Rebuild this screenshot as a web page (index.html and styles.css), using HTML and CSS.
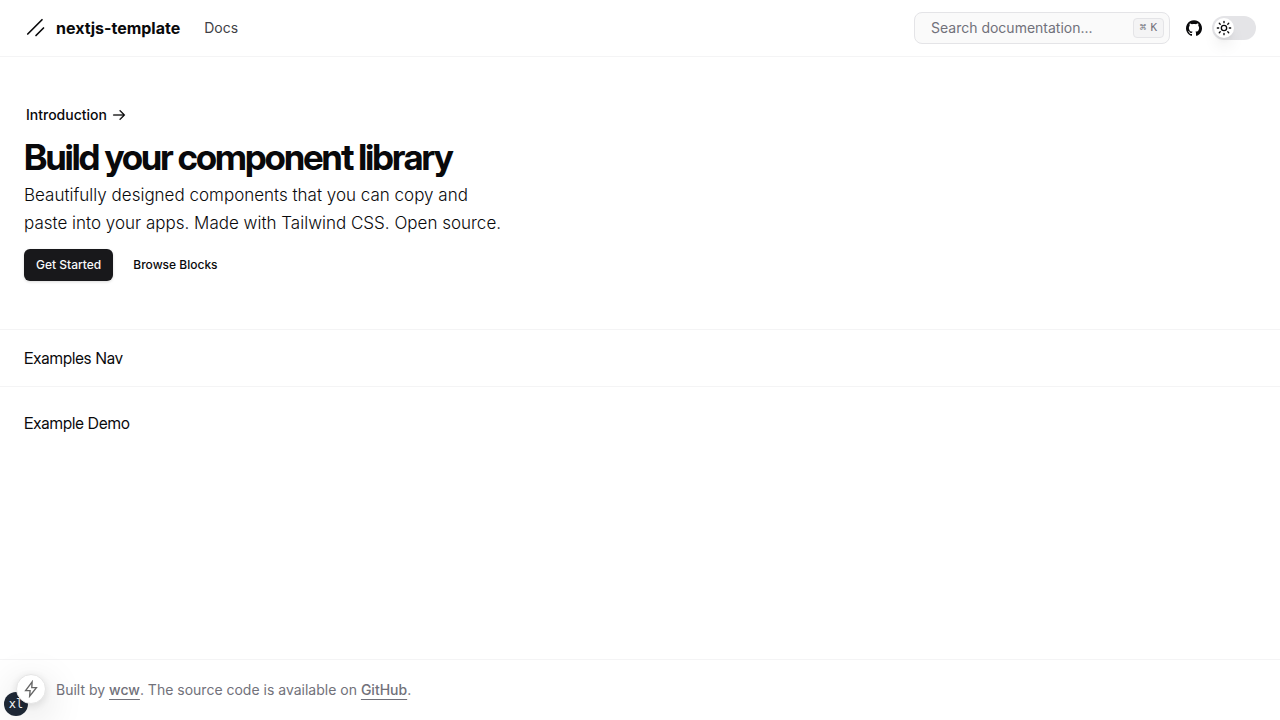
FILE: index.html
```html
<!DOCTYPE html>
<html lang="en">
<head>
<meta charset="utf-8">
<meta name="viewport" content="width=device-width, initial-scale=1">
<title>nextjs-template</title>
<link rel="stylesheet" href="styles.css">
</head>
<body>
<header class="site-header">
  <a class="brand" href="#">
    <svg class="brand-logo" viewBox="0 0 256 256" fill="none" stroke="currentColor" stroke-width="18" stroke-linecap="round" aria-hidden="true"><path d="M208 128L128 208M192 40L40 192"/></svg>
    <span>nextjs-template</span>
  </a>
  <nav class="main-nav"><a href="#">Docs</a></nav>
  <div class="header-tools">
    <button class="search" type="button"><span>Search documentation...</span><kbd><span class="cmd">⌘</span>K</kbd></button>
    <a class="icon-link" href="#" aria-label="GitHub">
      <svg viewBox="0 0 438.549 438.549" fill="currentColor" aria-hidden="true"><path d="M409.132 114.573c-19.608-33.596-46.205-60.194-79.798-79.8-33.598-19.607-70.277-29.408-110.063-29.408-39.781 0-76.472 9.804-110.063 29.408-33.596 19.605-60.192 46.204-79.8 79.8C9.803 148.168 0 184.854 0 224.63c0 47.78 13.94 90.745 41.827 128.906 27.884 38.164 63.906 64.572 108.063 79.227 5.14.954 8.945.283 11.419-1.996 2.475-2.282 3.711-5.14 3.711-8.562 0-.571-.049-5.708-.144-15.417a2549.81 2549.81 0 01-.144-25.406l-6.567 1.136c-4.187.767-9.469 1.092-15.846 1-6.374-.089-12.991-.757-19.842-1.999-6.854-1.231-13.229-4.086-19.13-8.559-5.898-4.473-10.085-10.328-12.56-17.556l-2.855-6.57c-1.903-4.374-4.899-9.233-8.992-14.559-4.093-5.331-8.232-8.945-12.419-10.848l-1.999-1.431c-1.332-.951-2.568-2.098-3.711-3.429-1.142-1.331-1.997-2.663-2.568-3.997-.572-1.335-.098-2.43 1.427-3.289 1.525-.859 4.281-1.276 8.28-1.276l5.708.853c3.807.763 8.516 3.042 14.133 6.851 5.614 3.806 10.229 8.754 13.846 14.842 4.38 7.806 9.657 13.754 15.846 17.847 6.184 4.093 12.419 6.136 18.699 6.136 6.28 0 11.704-.476 16.274-1.423 4.565-.952 8.848-2.383 12.847-4.285 1.713-12.758 6.377-22.559 13.988-29.41-10.848-1.14-20.601-2.857-29.264-5.14-8.658-2.286-17.605-5.996-26.835-11.14-9.235-5.137-16.896-11.516-22.985-19.126-6.09-7.614-11.088-17.61-14.987-29.979-3.901-12.374-5.852-26.648-5.852-42.826 0-23.035 7.52-42.637 22.557-58.817-7.044-17.318-6.379-36.732 1.997-58.24 5.52-1.715 13.706-.428 24.554 3.853 10.85 4.283 18.794 7.952 23.84 10.994 5.046 3.041 9.089 5.618 12.135 7.708 17.705-4.947 35.976-7.421 54.818-7.421s37.117 2.474 54.823 7.421l10.849-6.849c7.419-4.57 16.18-8.758 26.262-12.565 10.088-3.805 17.802-4.853 23.134-3.138 8.562 21.509 9.325 40.922 2.279 58.24 15.036 16.18 22.559 35.787 22.559 58.817 0 16.178-1.958 30.497-5.853 42.966-3.9 12.471-8.941 22.457-15.125 29.979-6.191 7.521-13.901 13.85-23.131 18.986-9.232 5.14-18.182 8.85-26.84 11.136-8.662 2.286-18.415 4.004-29.263 5.146 9.894 8.562 14.842 22.077 14.842 40.539v60.237c0 3.422 1.19 6.279 3.572 8.562 2.379 2.279 6.136 2.95 11.276 1.995 44.163-14.653 80.185-41.062 108.068-79.226 27.88-38.161 41.825-81.126 41.825-128.906-.01-39.771-9.818-76.454-29.414-110.049z"/></svg>
    </a>
    <label class="theme-switch">
      <input type="checkbox" role="switch" aria-label="Dark mode">
      <span class="thumb"><svg viewBox="0 0 24 24" fill="none" stroke="currentColor" stroke-width="2" stroke-linecap="round" stroke-linejoin="round" aria-hidden="true"><circle cx="12" cy="12" r="4"/><path d="M12 2v2M12 20v2M4.93 4.93l1.41 1.41M17.66 17.66l1.41 1.41M2 12h2M20 12h2M6.34 17.66l-1.41 1.41M19.07 4.93l-1.41 1.41"/></svg></span>
    </label>
  </div>
</header>
<main>
  <section class="hero">
    <a class="announcement" href="#">Introduction
      <svg viewBox="0 0 15 15" fill="currentColor" stroke="currentColor" stroke-width=".3" aria-hidden="true"><path fill-rule="evenodd" clip-rule="evenodd" d="M8.146 3.146a.5.5 0 0 1 .708 0l4 4a.5.5 0 0 1 0 .708l-4 4a.5.5 0 0 1-.708-.708L11.293 8H2.5a.5.5 0 0 1 0-1h8.793L8.146 3.854a.5.5 0 0 1 0-.708Z"/></svg>
    </a>
    <h1>Build your component library</h1>
    <p>Beautifully designed components that you can copy and paste into your apps. Made with Tailwind CSS. Open source.</p>
    <div class="actions">
      <a class="btn btn-primary" href="#">Get Started</a>
      <a class="btn" href="#">Browse Blocks</a>
    </div>
  </section>
  <nav class="examples-nav">Examples Nav</nav>
  <section class="example-demo">Example Demo</section>
</main>
<footer class="site-footer">
  <p>Built by <a href="#">wcw</a>. The source code is available on <a href="#">GitHub</a>.</p>
</footer>
<div class="breakpoint">xl</div>
<button class="dev-indicator" type="button" aria-label="Static route">
  <svg viewBox="0 0 16 16" fill="none" stroke="currentColor" stroke-width="1.2" stroke-linejoin="miter" aria-hidden="true"><path d="M9 1.6L3.2 9.4h4l-.4 5L12.8 6.8H8.7Z"/></svg>
</button>
</body>
</html>
```
FILE: styles.css
```css
* { box-sizing: border-box; }
body {
  margin: 0;
  min-height: 100vh;
  display: flex;
  flex-direction: column;
  background: #fff;
  color: #09090b;
  font: 16px/24px Inter, "Liberation Sans", sans-serif;
}
a { color: inherit; text-decoration: none; }
h1, p { margin: 0; }
svg { display: block; flex: none; }
button { font: inherit; cursor: pointer; }

.site-header {
  display: flex;
  align-items: center;
  padding: 12px 24px;
  border-bottom: 1px solid #f4f4f5;
}
.brand { display: flex; align-items: center; gap: 8px; font-weight: 700; }
.brand-logo { width: 24px; height: 24px; }
.main-nav { margin-left: 24px; font-size: 14px; line-height: 20px; color: #3f3f46; }
.header-tools { display: flex; align-items: center; margin-left: auto; }
.search {
  display: flex;
  align-items: center;
  justify-content: space-between;
  width: 256px;
  height: 32px;
  padding: 0 5px 0 16px;
  border: 1px solid #e4e4e7;
  border-radius: 8px;
  background: #fafafa;
  color: #71717a;
  font-size: 14px;
  line-height: 20px;
}
kbd {
  display: flex;
  align-items: center;
  gap: 4px;
  height: 20px;
  padding: 0 6px;
  border: 1px solid #e4e4e7;
  border-radius: 4px;
  background: #f4f4f5;
  font: 11px/16px "DejaVu Sans Mono", monospace;
}
.icon-link { padding: 8px; margin-left: 8px; }
.icon-link svg { width: 16px; height: 16px; }
.theme-switch {
  display: flex;
  align-items: center;
  width: 44px;
  height: 24px;
  margin-left: 2px;
  padding: 2px;
  border-radius: 12px;
  background: #e4e4e7;
  cursor: pointer;
}
.theme-switch input { appearance: none; width: 0; height: 0; margin: 0; }
.thumb {
  display: grid;
  place-items: center;
  width: 20px;
  height: 20px;
  border-radius: 50%;
  background: #fff;
  box-shadow: 0 10px 15px -3px rgb(0 0 0 / 10%), 0 4px 6px -4px rgb(0 0 0 / 10%);
}
.theme-switch input:checked + .thumb { margin-left: auto; }
.thumb svg { width: 16px; height: 16px; }

.hero {
  display: flex;
  flex-direction: column;
  align-items: flex-start;
  padding: 48px 24px;
  border-bottom: 1px solid #f4f4f5;
}
.announcement {
  display: flex;
  align-items: center;
  gap: 4px;
  padding: 0 2px;
  font-size: 14px;
  line-height: 20px;
  font-weight: 500;
}
.announcement svg { width: 16px; height: 16px; }
.hero h1 {
  margin: 12px 0 4px;
  font-size: 36px;
  line-height: 40px;
  font-weight: 700;
  letter-spacing: -0.05em;
}
.hero h1, .examples-nav, .example-demo { font-family: "Inter Display", Inter, sans-serif; }
.hero p { max-width: 480px; font-size: 17px; line-height: 28px; font-weight: 300; }
.actions { display: flex; gap: 8px; margin-top: 12px; }
.btn {
  padding: 8px 12px;
  border-radius: 6px;
  font-size: 12px;
  line-height: 16px;
  font-weight: 500;
}
.btn-primary { background: #18181b; color: #fafafa; box-shadow: 0 1px 3px rgb(0 0 0 / 15%); }

.examples-nav { padding: 16px 24px; border-bottom: 1px solid #f4f4f5; }
.example-demo { padding: 24px; }

.site-footer {
  margin-top: auto;
  padding: 18px 56px;
  border-top: 1px solid #f4f4f5;
  color: #71717a;
  font-size: 14px;
  line-height: 24px;
}
.site-footer a { font-weight: 500; text-decoration: underline; text-underline-offset: 4px; }

.breakpoint {
  position: fixed;
  left: 4px;
  bottom: 4px;
  display: grid;
  place-items: center;
  width: 24px;
  height: 24px;
  border-radius: 50%;
  background: #1f2937;
  color: #fff;
  font: 12px/16px "DejaVu Sans Mono", monospace;
}
.dev-indicator {
  position: fixed;
  left: 16px;
  bottom: 16px;
  display: grid;
  place-items: center;
  width: 30px;
  height: 30px;
  padding: 0;
  border: 1px solid #e5e5e5;
  border-radius: 50%;
  background: #fff;
  color: #666;
  box-shadow: 0 11px 40px rgb(0 0 0 / 20%), 0 2px 10px rgb(0 0 0 / 12%);
}
.dev-indicator svg { width: 18px; height: 18px; }
```
